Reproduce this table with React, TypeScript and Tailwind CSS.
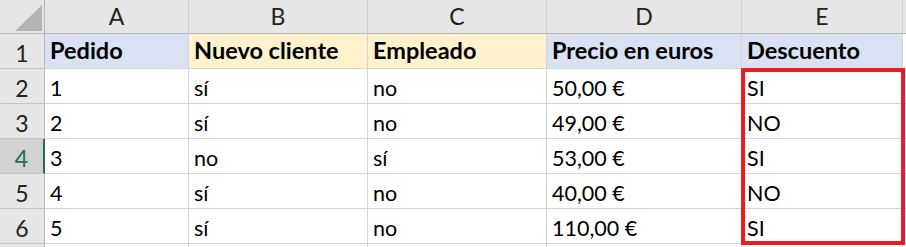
const COLS = ["A", "B", "C", "D", "E"];

const HEADERS = [
  { text: "Pedido", bg: "bg-[#d9e1f2]" },
  { text: "Nuevo cliente", bg: "bg-[#fff2cc]" },
  { text: "Empleado", bg: "bg-[#fff2cc]" },
  { text: "Precio en euros", bg: "bg-[#d9e1f2]" },
  { text: "Descuento", bg: "bg-[#d9e1f2]" },
];

const ROWS = [
  ["1", "sí", "no", "50,00 €", "SI"],
  ["2", "sí", "no", "49,00 €", "NO"],
  ["3", "no", "sí", "53,00 €", "SI"],
  ["4", "sí", "no", "40,00 €", "NO"],
  ["5", "sí", "no", "110,00 €", "SI"],
];

const SELECTED_ROW = 4;

const grid = "grid grid-cols-[45px_144px_179px_179px_195px_161px_1fr]";

function RowNumber({ n }: { n: number }) {
  const selected = n === SELECTED_ROW;
  return (
    <div
      className={`flex items-end justify-center pb-[3px] border-b border-[#c6c6c6] text-[23px] ${
        selected
          ? "bg-[#d2d2d2] text-[#217346] border-r-2 border-r-[#217346]"
          : "bg-[#e6e6e6] text-[#222] border-r border-r-[#b8b8b8]"
      }`}
    >
      {n}
    </div>
  );
}

export default function App() {
  return (
    <div
      className="relative w-[906px] h-[247px] overflow-hidden bg-white text-[21.5px] leading-none text-black"
      style={{ fontFamily: "Lato, 'Liberation Sans', sans-serif" }}
    >
      {/* Column headers */}
      <div className={`${grid} h-[34px]`}>
        <div className="relative bg-[#e6e6e6] border-r border-b border-[#b8b8b8]">
          <svg className="absolute left-[15px] top-[5px]" width="28" height="26" viewBox="0 0 28 26">
            <polygon points="27,0 27,26 0,26" fill="#b4b4b4" />
          </svg>
        </div>
        {COLS.map((c) => (
          <div
            key={c}
            className="flex items-end justify-center pb-[5px] bg-[#e6e6e6] border-r border-r-[#d0d0d0] border-b border-b-[#b8b8b8] text-[23px] text-[#222]"
          >
            {c}
          </div>
        ))}
        <div className="bg-[#e6e6e6] border-b border-[#b8b8b8]" />
      </div>

      {/* Row 1: titles */}
      <div className={`${grid} h-[35px]`}>
        <RowNumber n={1} />
        {HEADERS.map((h) => (
          <div
            key={h.text}
            className={`flex items-end pl-[5px] pb-[6px] text-[23.5px] font-bold border-r border-b border-[#d4d4d4] ${h.bg}`}
          >
            {h.text}
          </div>
        ))}
        <div className="border-b border-[#d4d4d4]" />
      </div>

      {/* Data rows */}
      {ROWS.map((row, i) => (
        <div key={i} className={`${grid} h-[35px]`}>
          <RowNumber n={i + 2} />
          {row.map((v, j) => (
            <div
              key={j}
              className="flex items-end pl-[5px] pb-[4px] border-r border-b border-[#d4d4d4]"
            >
              {v}
            </div>
          ))}
          <div className="border-b border-[#d4d4d4]" />
        </div>
      ))}

      {/* Partial row 7 */}
      <div className={`${grid} h-[35px]`}>
        <div className="bg-[#e6e6e6] border-r border-[#b8b8b8]" />
        {COLS.map((c) => (
          <div key={c} className="border-r border-[#d4d4d4]" />
        ))}
        <div />
      </div>

      {/* Highlight box over E2:E6 */}
      <div className="absolute left-[741px] top-[68px] w-[164px] h-[177px] border-4 border-[#ec1c24]" />
    </div>
  );
}
